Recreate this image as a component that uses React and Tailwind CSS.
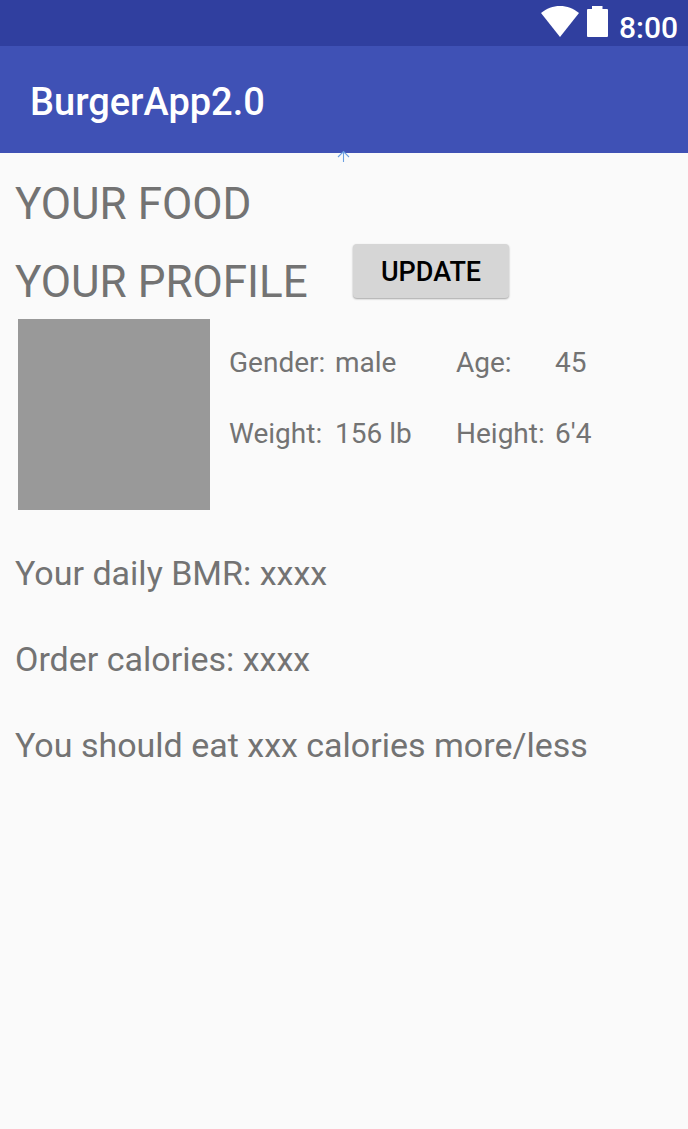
import React from "react";

const stats = [
  { label: "Gender:", value: "male" },
  { label: "Age:", value: "45" },
  { label: "Weight:", value: "156 lb" },
  { label: "Height:", value: "6'4" },
];

function StatusBar() {
  return (
    <div className="flex h-[46px] items-center justify-end bg-[#303f9f] pr-[10px] text-white">
      <svg className="mr-2 h-[31px] w-[38px] shrink-0 -mt-1" viewBox="0 0 38 31" fill="currentColor" aria-hidden="true">
        <path d="M0 7C5.500 2.500 12 0 19 0S32.500 2.500 38 7L19 31Z" />
      </svg>
      <svg className="mr-[11px] h-[31px] w-[21px] shrink-0 -mt-1" viewBox="0 0 21 31" fill="currentColor" aria-hidden="true">
        <path d="M5 0H15.500V3H20Q21 3 21 4V30Q21 31 20 31H1Q0 31 0 30V4Q0 3 1 3H5Z" />
      </svg>
      <span className="pt-[10px] text-[30px] leading-9 font-medium">8:00</span>
    </div>
  );
}

function AppBar() {
  return (
    <div className="relative flex h-[107px] items-center bg-[#3f51b5] px-[30px] pt-[5px]">
      <h1 className="text-[38px] leading-[46px] font-medium text-white">BurgerApp2.0</h1>
      <svg
        className="absolute -bottom-[9px] left-1/2 h-[12px] w-[14px] -translate-x-1/2"
        viewBox="0 0 14 12"
        fill="none"
        stroke="#6c9fe0"
        aria-hidden="true"
      >
        <path d="M6.500 12V1M1 7L6.500 1.500L12 7" strokeWidth="1.100" />
      </svg>
    </div>
  );
}

export default function App() {
  return (
    <div className="min-h-screen bg-[#fafafa] font-[Roboto,sans-serif] text-[#737373]">
      <header>
        <StatusBar />
        <AppBar />
      </header>
      <main className="px-[15px] pt-[25px]">
        <h2 className="text-[44px] leading-[52px]">YOUR FOOD</h2>
        <div className="mt-[14px] flex h-16 items-end">
          <h2 className="w-[338px] text-[44px] leading-[52px]">YOUR PROFILE</h2>
          <button
            type="button"
            className="h-[54px] w-[156px] self-start rounded-[4px] bg-[#d6d6d6] pt-[2px] text-[27px] leading-8 font-medium text-black shadow-[0_1px_2px_rgba(0,0,0,0.35)]"
          >
            UPDATE
          </button>
        </div>
        <section className="mt-[11px] flex pl-[3px]">
          <div className="h-[191px] w-[192px] shrink-0 bg-[#999999]" />
          <dl className="ml-[19px] mt-[27px] grid grid-cols-[227px_auto] content-start gap-y-[38px] text-[28px] leading-[33px]">
            {stats.map((stat, i) => (
              <div key={stat.label} className="flex whitespace-nowrap">
                <dt className={i % 2 === 0 ? "w-[106px]" : "w-[99px]"}>{stat.label}</dt>
                <dd>{stat.value}</dd>
              </div>
            ))}
          </dl>
        </section>
        <section className="mt-[43px] flex flex-col gap-[46px] text-[34px] leading-10">
          <p>Your daily BMR: xxxx</p>
          <p>Order calories: xxxx</p>
          <p>You should eat xxx calories more/less</p>
        </section>
      </main>
    </div>
  );
}
